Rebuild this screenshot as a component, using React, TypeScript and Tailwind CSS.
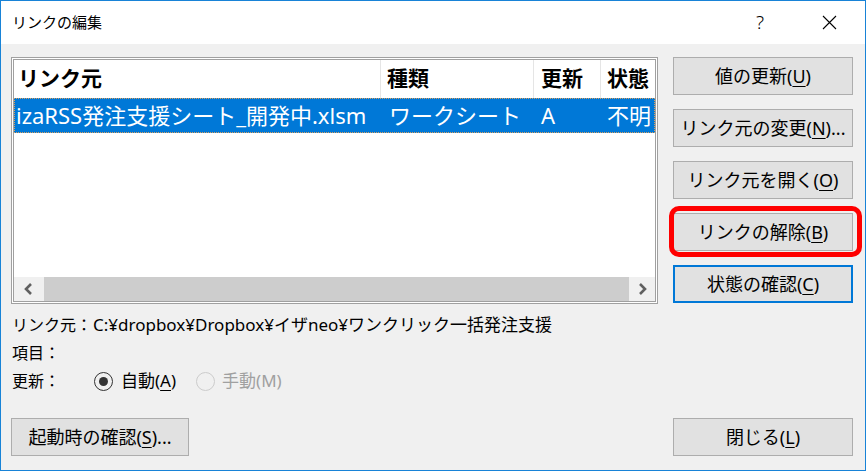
import React from 'react'

const font = { fontFamily: '"Noto Sans", "Noto Sans CJK JP", sans-serif' }

function U({ c }: { c: string }) {
  return <span className="underline underline-offset-[3px] decoration-1">{c}</span>
}

function Btn({ children, className = '' }: { children: React.ReactNode; className?: string }) {
  return (
    <div
      className={`h-[38px] flex items-center justify-center bg-[#e1e1e1] text-[18px] text-black ${className || 'border border-[#adadad]'}`}
    >
      {children}
    </div>
  )
}

function Chevron({ dir }: { dir: 'l' | 'r' }) {
  return (
    <svg width="12" height="14" viewBox="0 0 12 14">
      <polyline
        points={dir === 'l' ? '8,2 3,7 8,12' : '4,2 9,7 4,12'}
        fill="none"
        stroke="#606060"
        strokeWidth="2.6"
      />
    </svg>
  )
}

export default function App() {
  return (
    <div
      className="relative w-[866px] h-[471px] border border-[#1883d7] bg-[#f0f0f0] flex flex-col text-black"
      style={font}
    >
      {/* title bar */}
      <div className="h-[43px] bg-white flex items-center pl-[11px]">
        <span className="text-[15px]">リンクの編集</span>
        <div className="ml-auto w-[46px] flex justify-center text-[19px] font-light">?</div>
        <div className="ml-[23px] mr-[13px] w-[46px] flex justify-center">
          <svg width="15" height="15" viewBox="0 0 15 15">
            <path d="M1 1 L14 14 M14 1 L1 14" stroke="#000" strokeWidth="1.1" />
          </svg>
        </div>
      </div>

      <div className="flex-1 flex flex-col pl-[10px] pr-[12px] pt-[13px] pb-[14px]">
        <div className="flex gap-[15px]">
          {/* list view */}
          <div className="w-[647px] h-[247px] border border-[#a0a0a0] bg-white p-px flex">
            <div className="flex-1 border border-[#a0a0a0] bg-white flex flex-col overflow-hidden">
              <div className="h-[38px] flex text-[21px] font-bold">
                <div className="w-[367px] pl-[4px] flex items-center border-r border-[#e5e5e5]">リンク元</div>
                <div className="w-[153px] pl-[6px] flex items-center border-r border-[#e5e5e5]">種類</div>
                <div className="w-[67px] pl-[7px] flex items-center border-r border-[#e5e5e5]">更新</div>
                <div className="flex-1 pl-[6px] flex items-center whitespace-nowrap">状態</div>
              </div>
              <div className="h-[35px] flex bg-[#0078d7] text-white text-[22px] border border-dotted border-[#d8a060]">
                <div className="w-[366px] pl-[1px] flex items-center whitespace-nowrap">izaRSS発注支援シート_開発中.xlsm</div>
                <div className="w-[153px] pl-[8px] flex items-center whitespace-nowrap">ワークシート</div>
                <div className="w-[67px] pl-[7px] flex items-center">A</div>
                <div className="flex-1 pl-[6px] flex items-center whitespace-nowrap overflow-hidden">不明</div>
              </div>
              <div className="flex-1" />
              <div className="h-[24px] flex bg-[#f0f0f0]">
                <div className="w-[30px] flex items-center justify-center">
                  <Chevron dir="l" />
                </div>
                <div className="flex-1 bg-[#cdcdcd]" />
                <div className="w-[26px] flex items-center justify-center">
                  <Chevron dir="r" />
                </div>
              </div>
            </div>
          </div>

          {/* side buttons */}
          <div className="w-[180px] flex flex-col gap-[14px]">
            <Btn>
              値の更新(<U c="U" />)
            </Btn>
            <Btn>
              リンク元の変更(<U c="N" />)...
            </Btn>
            <Btn>
              リンク元を開く(<U c="O" />)
            </Btn>
            <Btn>
              リンクの解除(<U c="B" />)
            </Btn>
            <Btn className="border-2 border-[#0078d7]">
              状態の確認(<U c="C" />)
            </Btn>
          </div>
        </div>

        {/* info rows */}
        <div className="mt-[7px] flex flex-col text-[17px]">
          <div className="h-[28px] flex items-center">
            <div className="w-[82px] shrink-0 pl-px whitespace-nowrap text-[16px]">リンク元：</div>
            <div className="whitespace-nowrap">C:¥dropbox¥Dropbox¥イザneo¥ワンクリック一括発注支援</div>
          </div>
          <div className="h-[28px] flex items-center">
            <div className="w-[82px] pl-px text-[16px]">項目：</div>
          </div>
          <div className="h-[28px] flex items-center">
            <div className="w-[82px] pl-px text-[16px]">更新：</div>
            <div className="ml-px w-[19px] h-[19px] rounded-full border border-[#333] flex items-center justify-center">
              <div className="w-[9px] h-[9px] rounded-full bg-[#333]" />
            </div>
            <span className="ml-[8px]">
              自動(<U c="A" />)
            </span>
            <div className="ml-[20px] w-[19px] h-[19px] rounded-full border border-[#cccccc] bg-[#f0f0f0]" />
            <span className="ml-[7px] text-[#a0a0a0]">手動(M)</span>
          </div>
        </div>

        <div className="flex-1" />

        {/* bottom buttons */}
        <div className="flex justify-between">
          <Btn className="w-[178px] border border-[#adadad]">
            起動時の確認(<U c="S" />)...
          </Btn>
          <Btn className="w-[180px] border border-[#adadad]">
            閉じる(<U c="L" />)
          </Btn>
        </div>
      </div>

      {/* red annotation ring */}
      <div className="absolute left-[668px] top-[205px] w-[193px] h-[51px] border-[5px] border-[#ff0000] rounded-[10px] pointer-events-none" />
    </div>
  )
}
